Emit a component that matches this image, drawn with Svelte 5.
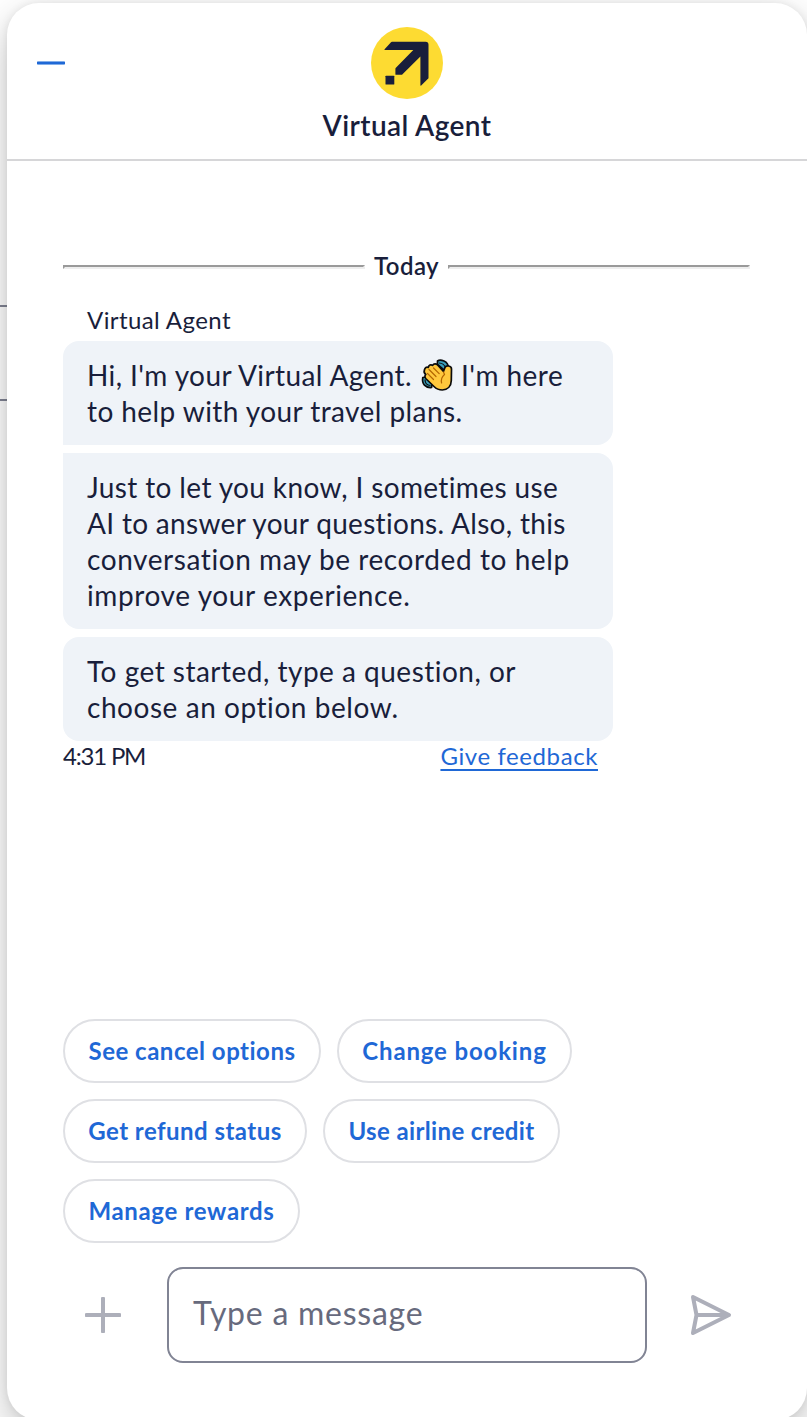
<script>
  const messages = [
    [],
    [
      ['Just to let you know, I sometimes use', 0.37],
      ['AI to answer your questions. Also, this', 0.31],
      ['conversation may be recorded to help', 0.58],
      ['improve your experience.', 0.6]
    ],
    [
      ['To get started, type a question, or', 0.49],
      ['choose an option below.', 0.55]
    ]
  ];
  const options = [
    [['See cancel options', 258, 0.5], ['Change booking', 235, 0.85]],
    [['Get refund status', 244, 0.46], ['Use airline credit', 237, 0.36]],
    [['Manage rewards', 237, 0.68]]
  ];
</script>

<div class="page">
  <div class="behind"></div>
  <main class="panel">
    <header>
      <button class="minimize" aria-label="Minimize"><span></span></button>
      <div class="brand">
        <svg width="72" height="72" viewBox="0 0 72 72">
          <circle cx="36" cy="36" r="36" fill="#fddb32" />
          <path fill="#191e3b" d="M21 14.700h33.500q3 0 3 3V51.300l-7.300 7.300q-.8.600-.8-.5V29.500L31.500 47.300q-.4.500-1 .5h-5.600q-.5 0-.5-.5v-5.600q0-.6.500-1L42.300 23H14q-1.200 0-.4-.8l6.400-6.900q.4-.6 1-.6z" />
          <rect x="14.500" y="48.700" width="8.800" height="8.800" rx=".6" fill="#191e3b" />
        </svg>
        <h1>Virtual Agent</h1>
      </div>
    </header>

    <section class="chat">
      <div class="day"><hr /><span>Today</span><hr /></div>
      <div class="sender">Virtual Agent</div>
      <div class="bubbles">
        {#each messages as lines, i}
          <div class="bubble" class:first={i === 0} class:middle={i === 1}>
            {#if i === 0}
              <div class="line greeting">
                <span class="hello">Hi, I'm your Virtual Agent.</span>
                <svg class="wave" width="32" height="32" viewBox="0 0 32 32" role="img" aria-label="👋">
                  <g fill="#3aa0bd" stroke="#0b0b0b" stroke-width="1.700" stroke-linejoin="round">
                    <path d="M16.500 2C19 .2 27.500 1.500 27.500 9.500l-4 2-7-6z" />
                    <path d="M1.800 18.500C.6 25 4.500 29 10.500 28.500l.7-3.500-6.500-7z" />
                  </g>
                  <path d="M18 4C21 4 24 6 24.500 9.500M4 20.500C4 24 6.300 26.300 9.500 26.500" fill="none" stroke="#0b0b0b" stroke-width="1.200" />
                  <path d="M3.500 10.800C3.900 8.500 5.600 7.600 7.300 8.400 7.600 6 9.900 5.100 11.600 6.400 12.800 4.500 15 4.500 16.600 6L22.500 12.300 23.900 8.700C25 6.200 30.500 6.200 30.500 10L30.300 21.500C30.200 27 26.800 30.800 21.300 31 17.800 31 15.500 30 13 27.500L5.200 20C3.600 18.300 3.600 16.500 4.800 15.400 3 14.200 2.900 12.300 3.500 10.800Z" fill="#ffc83d" stroke="#0b0b0b" stroke-width="1.700" stroke-linejoin="round" />
                  <path d="M6.500 14.500l6 6M8 10.500l7 7M12.500 9l5.700 5.700M22.500 13l1 2.500C20.700 17.900 19.800 20.500 20.600 24" fill="none" stroke="#b36500" stroke-width="1.200" stroke-linecap="round" />
                </svg>
                <span class="here">I'm here</span>
              </div>
              <div class="line help">to help with your travel plans.</div>
            {:else}
              {#each lines as [text, spacing]}
                <div class="line" style:letter-spacing="{spacing}px">{text}</div>
              {/each}
            {/if}
          </div>
        {/each}
      </div>
      <div class="meta"><time>4:31 PM</time><a href="#feedback">Give feedback</a></div>
    </section>

    <section class="options">
      {#each options as row}
        <div class="row">
          {#each row as [text, width, spacing]}
            <button style:width="{width}px" style:letter-spacing="{spacing}px">{text}</button>
          {/each}
        </div>
      {/each}
    </section>

    <footer>
      <button class="icon" aria-label="Add">
        <svg width="36" height="36" viewBox="0 0 36 36"><path d="M18 1.500v33M1.500 18h33" fill="none" stroke="#adafba" stroke-width="4" stroke-linecap="round" /></svg>
      </button>
      <div class="field">Type a message</div>
      <button class="icon send" aria-label="Send">
        <svg width="42" height="42" viewBox="0 0 42 42"><path d="M3 3l36 18L3 39l3.500-18zM6.500 21H38" fill="none" stroke="#adafba" stroke-width="4" stroke-linejoin="round" stroke-linecap="round" /></svg>
      </button>
    </footer>
  </main>
</div>

<style>
  :global(body) { background: #fff; }
  .page {
    display: grid;
    grid-template-columns: 7px 800px;
    width: 807px;
    height: 1417px;
    overflow: hidden;
    padding-top: 3px;
    box-sizing: border-box;
    font-family: Lato, "Liberation Sans", sans-serif;
    color: #191e3b;
  }
  .behind {
    height: 92px;
    margin-top: 302px;
    border-top: 2px solid #818494;
    border-bottom: 2px solid #818494;
  }
  .panel {
    display: flex;
    flex-direction: column;
    width: 800px;
    height: 1417px;
    border-radius: 32px;
    background: #fff;
    box-shadow: 0 16px 40px rgba(0, 0, 0, 0.24), 0 0 8px rgba(0, 0, 0, 0.08);
  }
  button { padding: 0; border: 0; background: none; font: inherit; color: inherit; }
  header {
    display: grid;
    grid-template-columns: 88px 1fr 88px;
    height: 158px;
    box-sizing: border-box;
    border-bottom: 2px solid #d6d6d8;
  }
  .minimize {
    display: flex;
    align-self: start;
    height: 28px;
    width: 28px;
    margin: 46px 0 0 30px;
    align-items: center;
  }
  .minimize span { width: 28px; height: 4px; border-radius: 1px; background: linear-gradient(#83aee9 1px, #1f68d6 1px 3px, #83aee9 3px); }
  .brand { display: flex; flex-direction: column; align-items: center; padding-top: 24px; }
  .brand svg { display: block; }
  h1 { margin: 8px 0 0; font-size: 28px; line-height: 36px; font-weight: 600; letter-spacing: 0.4px; }
  .chat { padding: 92px 56px 0; height: 858px; box-sizing: border-box; }
  .day {
    display: flex;
    align-items: center;
    gap: 9px;
    height: 28px;
    width: 687px;
    font-size: 24px;
    font-weight: 600;
    letter-spacing: 0.4px;
  }
  .day span { height: 28px; line-height: 26px; }
  .day hr {
    flex: 1;
    height: 4px;
    box-sizing: border-box;
    margin: 0;
    border: 2px solid;
    border-color: #9a9a9a #eee #eee #9a9a9a;
  }
  .sender { margin: 24px 0 0 24px; height: 36px; font-size: 24px; line-height: 30px; letter-spacing: 0.4px; }
  .bubbles { display: grid; gap: 8px; width: 550px; }
  .bubble { padding: 16px 24px; border-radius: 16px; background: #eff3f8; }
  .first { border-bottom-left-radius: 0; }
  .middle { border-top-left-radius: 0; }
  .line { height: 36px; font-size: 28px; line-height: 36px; white-space: nowrap; }
  .greeting { display: flex; }
  .hello { letter-spacing: 0.4px; }
  .here { letter-spacing: 0.45px; }
  .help { letter-spacing: 0.43px; }
  .wave { flex: none; margin: 2px 8px 0 9px; }
  .meta {
    display: flex;
    justify-content: space-between;
    width: 535px;
    font-size: 24px;
    line-height: 30px;
  }
  time { letter-spacing: -1.2px; }
  a { color: #1f68d6; letter-spacing: 0.59px; text-decoration-thickness: 2px; text-underline-offset: 4px; }
  .options { display: grid; gap: 16px; padding-left: 56px; }
  .row { display: flex; gap: 16px; height: 64px; }
  .row button {
    padding-bottom: 2px;
    border: 2px solid #dfe0e4;
    border-radius: 32px;
    color: #1f68d6;
    font-size: 24px;
    font-weight: 700;
    white-space: nowrap;
  }
  footer {
    display: grid;
    grid-template-columns: 36px 480px 42px;
    align-items: center;
    margin: 24px 0 0 78px;
    height: 96px;
    column-gap: 46px;
  }
  .icon, .icon svg { display: block; }
  .send { margin-left: -3px; }
  .field {
    height: 96px;
    box-sizing: border-box;
    padding-left: 24px;
    border: 2px solid #818494;
    border-radius: 16px;
    color: #676a7d;
    font-size: 32px;
    line-height: 88px;
    letter-spacing: 0.75px;
  }
</style>
